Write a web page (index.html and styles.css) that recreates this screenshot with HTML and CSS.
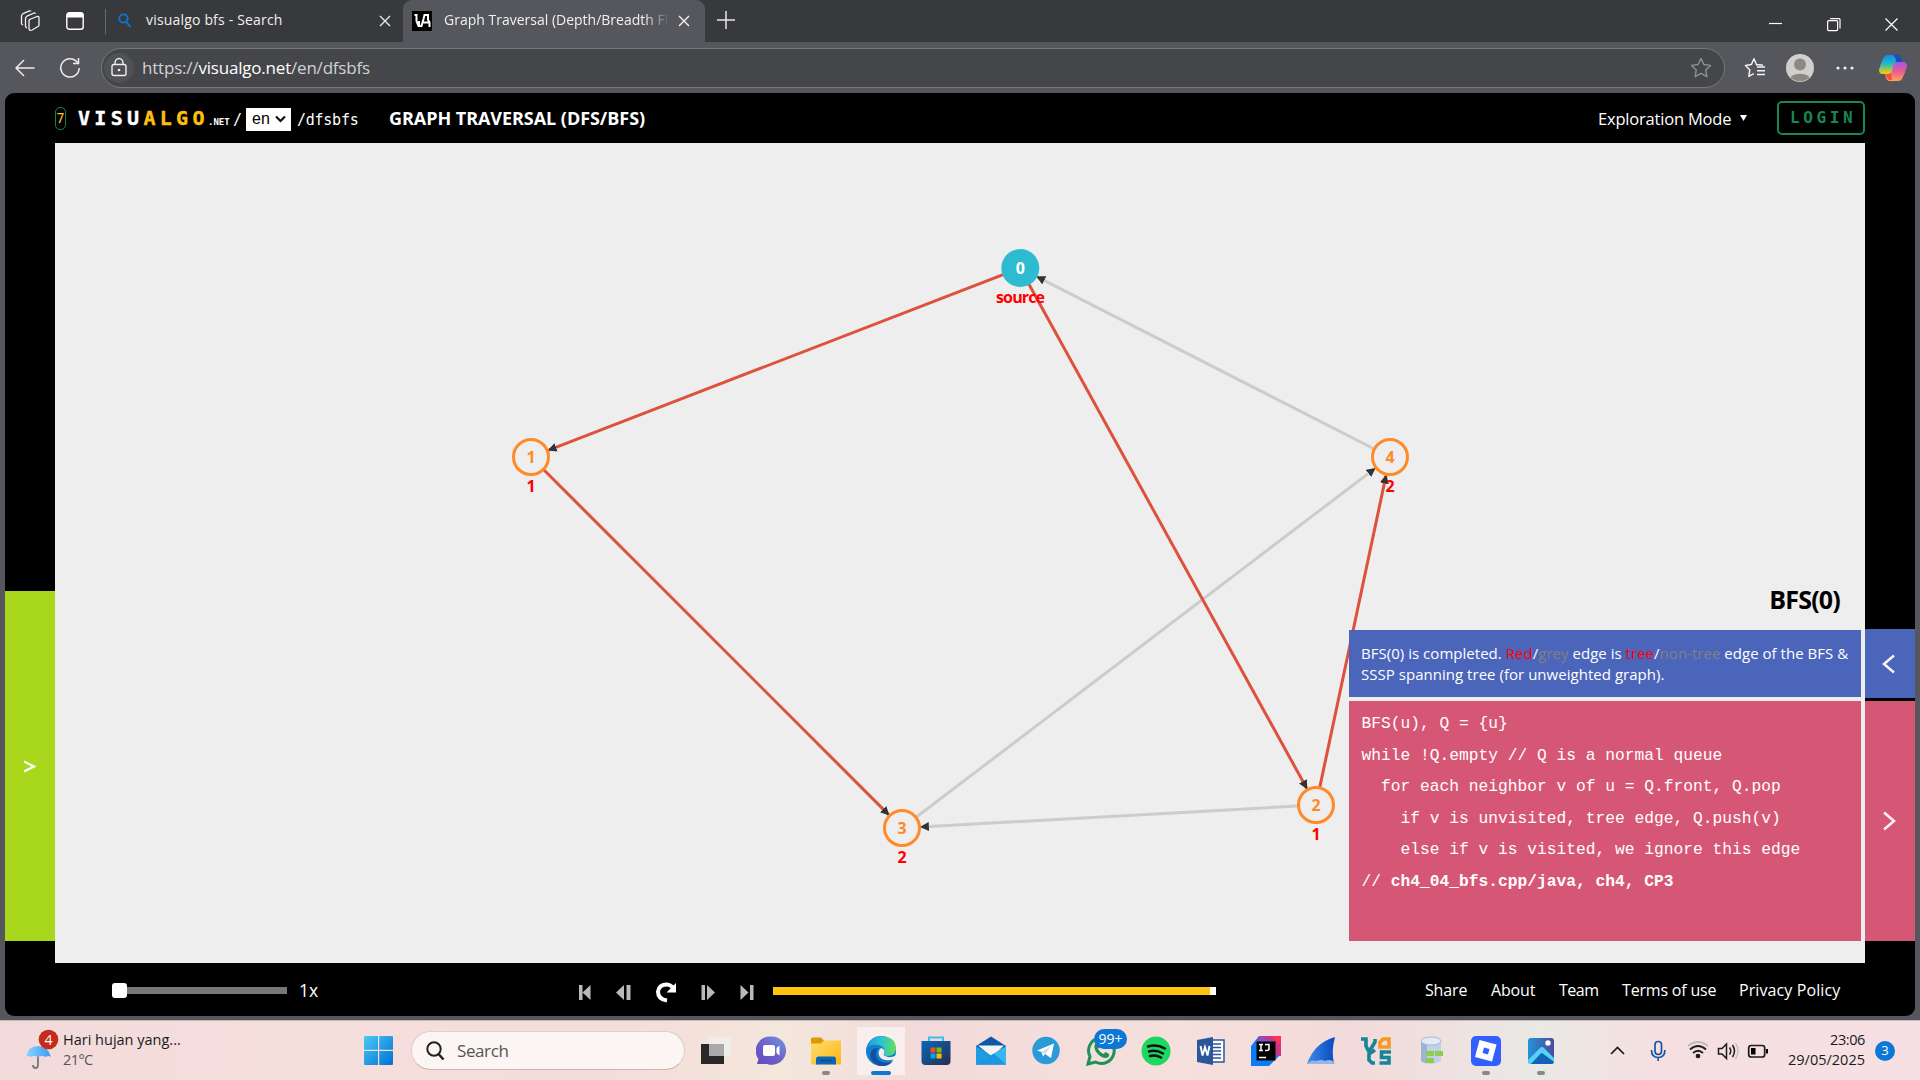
FILE: index.html
```html
<!DOCTYPE html>
<html lang="en">
<head>
<meta charset="utf-8">
<title>Graph Traversal (Depth/Breadth First Search) - VisuAlgo</title>
<link rel="stylesheet" href="styles.css">
</head>
<body>
<div class="screen">
  <div class="tabbar">
    <svg class="ic-spaces" width="22" height="22" viewBox="0 0 22 22"><g fill="none" stroke="#f2f2f2" stroke-width="1.3" stroke-linejoin="round"><path d="M10.500 9.500 18 6.500q2-.5 2 1.500v7q0 1-1 1.500l-6 3.500q-3 1-3-1.500v-7q0-1.300.5-2zM6.500 17V8.500q0-1.500 1.500-2.300l7-3.200q1-.4 1.500.6M2.500 14V6q0-1.500 1.500-2.300L10.500.9q1-.3 1.500.5M6.500 17l1.500 1M2.500 14l1.500 1"/></g></svg>
    <svg class="ic-tabs" width="18" height="18" viewBox="0 0 18 18"><rect x=".8" y=".8" width="16.400" height="16.400" rx="2.500" fill="none" stroke="#fff" stroke-width="1.400"/><path d="M1 3q0-2 2-2h12q2 0 2 2v2.500H1z" fill="#fff"/></svg>
    <i class="vline"></i>
    <svg class="ic-find" width="14" height="16" viewBox="0 0 14 16"><circle cx="5.500" cy="5.500" r="4.200" fill="none" stroke="#0a78d4" stroke-width="1.800"/><path d="M8.500 9l4 5" stroke="#0a78d4" stroke-width="2"/></svg>
    <span class="tab1">visualgo bfs - Search</span>
    <svg class="x1" width="12" height="12" viewBox="0 0 12 12"><path d="M1 1l10 10M11 1L1 11" stroke="#e8e8e8" stroke-width="1.400"/></svg>
    <div class="tab">
      <svg width="20" height="20" viewBox="0 0 20 20"><path d="M0 0h20v20H0z"/><path d="M2.500 4h2v6l2 5h3l2-7 1-4h3.500v5l1.500 2v5M11.500 11.500h5M7 10v4" fill="none" stroke="#fff" stroke-width="2"/></svg>
      <span class="tab2">Graph Traversal (Depth/Breadth Fi</span>
      <svg width="12" height="12" viewBox="0 0 12 12"><path d="M1 1l10 10M11 1L1 11" stroke="#f2f2f2" stroke-width="1.400"/></svg>
    </div>
    <svg class="plus" width="18" height="18" viewBox="0 0 18 18"><path d="M9 0v18M0 9h18" stroke="#e8e8e8" stroke-width="1.500"/></svg>
    <svg class="win" width="130" height="16" viewBox="0 0 130 16"><g fill="none" stroke="#fff" stroke-width="1.200"><path d="M0 6.500h13"/><rect x="58.600" y="3.600" width="10" height="10" rx="1"/><path d="M61 1.600h9q1 0 1 1v9"/><path d="M116.500 1.500l12 12M128.500 1.500l-12 12"/></g></svg>
  </div>
  <div class="toolbar">
    <svg class="ic-back" width="20" height="18" viewBox="0 0 20 18"><path d="M9 1L1 9l8 8M1 9h18.500" fill="none" stroke="#eee" stroke-width="1.500"/></svg>
    <svg class="ic-reload" width="22" height="22" viewBox="0 0 22 22"><path d="M18.500 5.500A9.200 9.200 0 1 0 20.200 11M19.500 1v5.500H14" fill="none" stroke="#eee" stroke-width="1.500"/></svg>
    <div class="address">
      <svg width="32" height="32" viewBox="0 0 32 32"><circle cx="16" cy="16" r="15" fill="#505155"/><rect x="9" y="12.500" width="14" height="11" rx="2" fill="none" stroke="#eee" stroke-width="1.400"/><path d="M12 12.500V11a4 4.500 0 0 1 8 0v1.500" fill="none" stroke="#eee" stroke-width="1.400"/><circle cx="16" cy="18" r="1.300" fill="#eee"/></svg>
      <span class="url">https://<b>visualgo.net</b>/en/dfsbfs</span>
      <svg class="star" width="22" height="22" viewBox="0 0 22 22"><path d="M11 1.500l2.900 6 6.600.9-4.800 4.600 1.200 6.600L11 16.400l-5.900 3.200 1.200-6.600L1.500 8.400l6.600-.9z" fill="none" stroke="#8e8f92" stroke-width="1.400" stroke-linejoin="round"/></svg>
    </div>
    <svg class="fav" width="22" height="22" viewBox="0 0 22 22"><path d="M13 8h-.3L10 1.800 7.400 7.500l-5.900.9 4.300 4.500-1 6.500 5-2.700M13 10h8M13 13.700h8M13 17.400h8M12.600 7.500l6.400.8" fill="none" stroke="#f2f2f2" stroke-width="1.500" stroke-linejoin="round"/></svg>
    <svg class="avatar" width="28" height="28" viewBox="0 0 28 28"><circle cx="14" cy="14" r="14" fill="#d1cfcb"/><circle cx="14" cy="10.500" r="6" fill="#8c8884"/><path d="M4.500 23.500a10.500 6.500 0 0 1 19 0A14 14 0 0 1 4.500 23.500z" fill="#8c8884"/></svg>
    <svg class="dots" width="18" height="4" viewBox="0 0 18 4" fill="#eee"><circle cx="2" cy="2" r="1.600"/><circle cx="9" cy="2" r="1.600"/><circle cx="16" cy="2" r="1.600"/></svg>
    <svg class="copilot" width="28" height="28" viewBox="0 0 28 28"><defs><linearGradient id="ca" x1="0" y1="0" x2="0" y2="1"><stop offset="0" stop-color="#168af0"/><stop offset=".45" stop-color="#22b8c4"/><stop offset="1" stop-color="#ffd000"/></linearGradient><linearGradient id="cb" x1="0" y1="0" x2="0" y2="1"><stop offset="0" stop-color="#a355f0"/><stop offset=".5" stop-color="#ed5a8e"/><stop offset="1" stop-color="#ffa35a"/></linearGradient></defs><path d="M9 1h9q2 0 3 3l1 4h-4q-2 0-3 3l-2 7q-1 2-4 2H4q-4 0-4-4Q2 8 5 3q1-2 4-2z" fill="url(#ca)"/><path d="M14 1h5q2 0 3 3l1 4h-5q-2 0-1-3z" fill="#164cc4"/><path d="M19 27h-9q-2 0-3-3l-1-4h4q2 0 3-3l2-7q1-2 4-2h5q4 0 4 4-2 8-5 13-1 2-4 2z" fill="url(#cb)"/><path d="M7 20h5l1 6h-2q-2 0-3-2z" fill="#f4512d"/></svg>
  </div>
  <div class="page">
    <header class="head">
      <span class="seven">7</span>
      <span class="logo">VISU<em>ALGO</em></span><span class="net">.NET</span><span class="slash">/</span>
      <span class="sel">en<svg width="11" height="8" viewBox="0 0 11 8"><path d="M1 1.500L5.500 6 10 1.500" fill="none" stroke="#111" stroke-width="2.200"/></svg></span>
      <span class="path">/dfsbfs</span>
      <span class="title">GRAPH TRAVERSAL (DFS/BFS)</span>
      <span class="mode">Exploration Mode</span>
      <svg class="tri" width="7" height="6" viewBox="0 0 7 6"><path d="M0 0h7L3.500 6z" fill="#fff"/></svg>
      <span class="login">LOGIN</span>
    </header>
    <main class="middle">
      <div class="lrail"><div class="green"><svg width="13" height="13" viewBox="0 0 13 13"><path d="M1 1.500l10 5-10 5" fill="none" stroke="#fff" stroke-width="2.200"/></svg></div></div>
      <div class="canvas">
        <svg class="graph" width="1810" height="820" viewBox="55 143 1810 820">
          <defs><marker id="ar" viewBox="0 0 8 8" refX="7" refY="4" markerWidth="9" markerHeight="9" markerUnits="userSpaceOnUse" orient="auto"><path d="M0 0l8 4-8 4z" fill="#333"/></marker></defs>
          <g class="edge grey"><path d="M1390 457L1037.200 276.800"/><path d="M902 828L1374.700 468.600"/><path d="M1316 805L921 827"/></g>
          <g class="edge red"><path d="M1020 268L548.700 450.200"/><path d="M1020 268L1306.700 788.300"/><path d="M531 457L888.600 814.600"/><path d="M1316 805L1386 475.600"/></g>
          <g class="lab"><text x="1020.500" y="302.500" textLength="49">source</text><text x="531" y="491.500">1</text><text x="1390" y="491.500">2</text><text x="1316" y="839.500">1</text><text x="902" y="862.500">2</text></g>
          <circle cx="1020.300" cy="268" r="19" fill="#2ebbd1"/>
          <g class="node"><circle cx="531" cy="457" r="17.500"/><circle cx="1390" cy="457" r="17.500"/><circle cx="1316" cy="805" r="17.500"/><circle cx="902" cy="828" r="17.500"/></g>
          <g class="num"><text x="1020.300" y="274" class="w">0</text><text x="531" y="463">1</text><text x="1390" y="463">4</text><text x="1316" y="811">2</text><text x="902" y="834">3</text></g>
        </svg>
        <div class="info">
          <h2>BFS(0)</h2>
          <div class="status">BFS(0) is completed. <i class="r">Red</i>/<i class="g">grey</i> edge is <i class="r">tree</i>/<i class="g">non-tree</i> edge of the BFS &amp;<br>SSSP spanning tree (for unweighted graph).</div>
          <div class="code">
            <div>BFS(u), Q = {u}</div>
            <div>while !Q.empty // Q is a normal queue</div>
            <div class="in1">for each neighbor v of u = Q.front, Q.pop</div>
            <div class="in2">if v is unvisited, tree edge, Q.push(v)</div>
            <div class="in2">else if v is visited, we ignore this edge</div>
            <div>// <b>ch4_04_bfs.cpp/java, ch4, CP3</b></div>
          </div>
        </div>
      </div>
      <div class="rrail"><div class="blue"><svg width="14" height="20" viewBox="0 0 14 20"><path d="M12 1.500L2 10l10 8.500" fill="none" stroke="#f4f4f8" stroke-width="2.600"/></svg></div><div class="pink"><svg width="14" height="20" viewBox="0 0 14 20"><path d="M2 1.500l10 8.500-10 8.500" fill="none" stroke="#f9f1f3" stroke-width="2.600"/></svg></div></div>
    </main>
    <footer class="foot">
      <span class="slider"><i></i></span><span class="speed">1x</span>
      <svg class="play" width="178" height="22" viewBox="576 981 178 22"><g fill="#b9b9b9"><path d="M579 985h3.500v15H579zM590.500 985v15l-8-7.500zM624 985v15l-8-7.500zM626.500 985h4v15h-4zM701.500 985h3.500v15h-3.500zM707 985l8 7.500-8 7.500zM740.500 985l8 7.500-8 7.500zM750 985h3.500v15H750z"/></g><path d="M667 1000.500q-9-1-9-9 1-7 9-7 3 0 6 3" fill="none" stroke="#fff" stroke-width="4"/><path d="M676 983v9.500h-9.500z" fill="#fff"/></svg>
      <span class="progress"></span>
      <nav><a class="n1">Share</a><a class="n2">About</a><a class="n3">Team</a><a class="n4">Terms of use</a><a class="n5">Privacy Policy</a></nav>
    </footer>
  </div>
  <div class="taskbar">
    <svg class="weather" width="34" height="44" viewBox="0 0 34 44"><defs><linearGradient id="um"><stop offset="0" stop-color="#8fd2ff"/><stop offset="1" stop-color="#3a9cf2"/></linearGradient></defs><path d="M12 21v15q0 3-2.500 3T7 36" fill="none" stroke="#777" stroke-width="1.800"/><path d="M0 28Q2 17 12 17T25 28q-3-2-5 0-4-2-8 0-4-2-7 0-3-2-5 0z" fill="url(#um)"/><circle cx="22.500" cy="10.500" r="9.800" fill="#c42b1c"/><text x="22.500" y="15.500" class="b4">4</text></svg>
    <div class="wtext"><span>Hari hujan yang...</span><span class="deg">21°C</span></div>
    <svg class="start" width="29" height="29" viewBox="0 0 29 29"><defs><linearGradient id="wn" x1="0" y1="0" x2="1" y2="1"><stop offset="0" stop-color="#4cc9fa"/><stop offset="1" stop-color="#0070d2"/></linearGradient></defs><path d="M1 0h13v13.800H0V1q0-1 1-1zM15.200 0H28q1 0 1 1v12.800H15.200zM0 15h14v14H1q-1 0-1-1zM15.200 15H29v13q0 1-1 1H15.200z" fill="url(#wn)"/></svg>
    <div class="search"><svg width="19" height="20" viewBox="0 0 19 20"><circle cx="8" cy="8" r="6.700" fill="none" stroke="#222" stroke-width="2"/><path d="M12.500 13l5 5.500" stroke="#222" stroke-width="2.500"/></svg><span>Search</span></div>
    <div class="apps">
      <span><svg viewBox="0 0 30 30"><path d="M0 8h23v20H0z" fill="#282828"/><path d="M8 1h22v19H8z" fill="#eee" opacity=".9"/><path d="M8 8h15v12H8z" fill="#aaa"/></svg></span>
      <span><svg viewBox="0 0 30 30"><defs><linearGradient id="ch" x1="1" y1="0" x2="0" y2="1"><stop offset="0" stop-color="#6a9bea"/><stop offset=".5" stop-color="#7360c6"/><stop offset="1" stop-color="#5a4bc4"/></linearGradient></defs><path d="M15 .5a14.200 14.200 0 1 1-4 27.500H1l1.500-5A14.200 14.200 0 0 1 15 .5z" fill="url(#ch)"/><rect x="7" y="9" width="12" height="11" rx="2" fill="#fff"/><path d="M20.500 12l3-2.500v10l-3-2.500z" fill="#fff"/></svg></span>
      <span class="run"><svg viewBox="0 0 30 30"><defs><linearGradient id="fo" x1="0" y1="0" x2="1" y2="1"><stop offset="0" stop-color="#ffdb70"/><stop offset="1" stop-color="#fdb813"/></linearGradient></defs><path d="M0 3q0-1.500 1.500-1.500H10l3 3V9H0z" fill="#dd9a06"/><path d="M0 7.500h10l3-3h17v24H0z" fill="url(#fo)"/><path d="M5 28.500V23q0-2.500 2.500-2.500h15q2.500 0 2.500 2.500v5.500z" fill="#0c66b8"/><path d="M9 24.500h12" stroke="#084a8c" stroke-width="1.500"/></svg></span>
      <span class="on"><svg viewBox="0 0 30 30"><defs><linearGradient id="e1"><stop offset="0" stop-color="#1f9be0"/><stop offset=".5" stop-color="#2dc3d2"/><stop offset="1" stop-color="#67df55"/></linearGradient></defs><circle cx="15" cy="15" r="15" fill="#0f7fd2"/><path d="M1 11Q5 0 16 0q14 1 14 13-1 7-8 7-5 0-4-3 2-7-6-8-6-1-11 2z" fill="url(#e1)"/><path d="M12 12q-5 8 2 13 6 4 13 0-6 7-15 4.500Q2 24 5 16q2-4 7-4z" fill="#11519b"/><path d="M30 19.500q-6 3-11 .5-2-1-.8-3.500Q19 13 15 12q-4 3-1.500 8.500Q17 26 28 23.500z" fill="#f8ecec"/></svg></span>
      <span><svg viewBox="0 0 30 30"><defs><linearGradient id="st" x1="0" y1="0" x2="1" y2="1"><stop offset="0" stop-color="#0869bd"/><stop offset="1" stop-color="#272c50"/></linearGradient></defs><path d="M8 6V1.500h14V6" fill="none" stroke="#3ac0ef" stroke-width="2"/><path d="M.5 5h29v20q0 4-4 4h-21q-4 0-4-4z" fill="url(#st)"/><path d="M9.500 11.500h5v5h-5z" fill="#f25022"/><path d="M15.500 11.500h5v5h-5z" fill="#7fba00"/><path d="M9.500 17.500h5v5h-5z" fill="#00a4ef"/><path d="M15.500 17.500h5v5h-5z" fill="#ffb900"/></svg></span>
      <span><svg viewBox="0 0 30 30"><path d="M0 10L15 .5 30 10v18.500H0z" fill="#0b58a8"/><path d="M2 9.500h26L16 21z" fill="#f4f4f4"/><path d="M0 10l16 10-14 8.500H0z" fill="#1e9be2"/><path d="M30 10v18.500H0z" fill="#35b7ef"/><path d="M0 28.500L18 17.500l12 11z" fill="#1d96e0"/></svg></span>
      <span><svg viewBox="0 0 30 30"><circle cx="15" cy="14.500" r="13.700" fill="#2a9bd6"/><path d="M6 14.500L23 7.500 20 22l-6-4-2 2.500-1.500-4.500z" fill="#fff"/><path d="M10.500 16L20 10l-6 8z" fill="#c7dfed"/></svg></span>
      <span><svg viewBox="0 0 30 30"><path d="M2 28l2-7.500A12.800 12.800 0 1 1 9.500 26z" fill="none" stroke="#1e9155" stroke-width="3"/><path d="M9 8q2-2 3 0l1.500 3-1.500 2q2 3.500 5.500 5l2-2 3.500 2q1 3-3 4-5 0-9-5-4-5-2-9z" fill="#1e9155"/></svg><i class="badge">99+</i></span>
      <span><svg viewBox="0 0 30 30"><circle cx="15" cy="15" r="14.500" fill="#1ed760"/><path d="M7 10.500q9-2.500 17 2M8 15.500q7-2 14 2M9 20q6-1.500 11 1.500" fill="none" stroke="#111" stroke-width="2.500" stroke-linecap="round"/></svg></span>
      <span><svg viewBox="0 0 30 30"><path d="M14 4h14v22H14z" fill="#fff" stroke="#2b579a" stroke-width="1.500"/><path d="M17 8h8M17 11.500h8M17 15h8M17 18.500h8M17 22h8" stroke="#2b579a" stroke-width="1.500"/><path d="M1 4l16-3v28L1 26z" fill="#2b579a"/><path d="M4.500 10l2 9.500L9 11l2.500 8.500 2-9.500" fill="none" stroke="#fff" stroke-width="1.900"/></svg></span>
      <span><svg viewBox="0 0 30 30"><path d="M8 0h22v18L18 30H0V10z" fill="#087cfa"/><path d="M10 0h20v20l-6-1V6L5 5z" fill="#cf3384"/><path d="M20 0h10v10z" fill="#fe315d"/><path d="M0 12L12 0l8 6L6 8z" fill="#6b57ff" opacity=".6"/><path d="M5.500 5.500h19v19h-19z"/><path d="M8 8.500h4M10 8.500v6M8 14.500h4M14 8.500h4v4q0 2-2 2h-2M8 21.500h7" fill="none" stroke="#fff" stroke-width="1.500"/></svg></span>
      <span><svg viewBox="0 0 30 30"><defs><linearGradient id="ws"><stop offset="0" stop-color="#3f8de9"/><stop offset="1" stop-color="#0649c0"/></linearGradient></defs><path d="M1 28Q8 7 29 1q-4 14-1 27z" fill="url(#ws)"/><path d="M1 28q4-5 9-3 5-2 9 0 4-2 8 0l2 3z" fill="#94b7e5"/></svg></span>
      <span><svg viewBox="0 0 30 30"><g fill="none" stroke="#168596" stroke-width="3.600"><path d="M0 3h5v7l3 6M14 3v3l-6 10"/><path d="M14 14l-6 4v6l3 3h3"/><path d="M30 16h-9.500v5.500H28V27h-9.500"/></g><path d="M19 11V6l3-3h6v8z" fill="none" stroke="#f59a23" stroke-width="3.600"/></svg></span>
      <span><svg viewBox="0 0 30 30"><path d="M5 5v20q10 6 20 0V5z" fill="#c1d0e6"/><path d="M5 5v20q3 2 6 2.500V7z" fill="#9db3d4"/><ellipse cx="15" cy="5" rx="10" ry="4" fill="#e3ebf5" stroke="#a9bcd7"/><path d="M10 15h8v5h-8zM19 15h8v5h-8zM10 22h8v5h-8z" fill="#8dcf4d"/></svg></span>
      <span class="run"><svg viewBox="0 0 30 30"><rect width="30" height="30" rx="5" fill="#335fff"/><path d="M8.500 4l17 4.500-4.500 17-17-4.500zM13 11.500l-1.500 5.500 5.500 1.500 1.500-5.500z" fill="#fff" fill-rule="evenodd"/></svg></span>
      <span class="run"><svg viewBox="0 0 30 30"><defs><linearGradient id="ph"><stop offset="0" stop-color="#2493d8"/><stop offset="1" stop-color="#4b4b9e"/></linearGradient></defs><rect x="2" y="2" width="26" height="26" rx="3" fill="url(#ph)"/><path d="M2 24l12-12q2-2 4 0l10 10v4L15 17 5 28q-3 0-3-3z" fill="#54d3f5"/><path d="M16 17l12 9q-1 2-3 2H5z" fill="#1263b7"/><circle cx="22" cy="7" r="2.700" fill="#fff"/></svg></span>
    </div>
    <svg class="tray" width="164" height="30" viewBox="1608 1035 164 30"><g fill="none" stroke="#1c1c1c" stroke-width="1.700"><path d="M1611 1053l6.500-6.500 6.500 6.500"/><g stroke="#1855a5"><rect x="1655" y="1040.500" width="6.500" height="13" rx="3.200"/><path d="M1651.500 1049q0 7.500 6.700 7.500t6.700-7.500M1658.200 1056.500v3.500"/></g><path d="M1690 1048.500q8-7 16 0M1693 1052q5-4.500 10 0" /><path d="M1688 1045q10-8 20 0" stroke="#bbb"/><circle cx="1698" cy="1055" r="1.500" fill="#1c1c1c"/><path d="M1718.500 1047.500h3.500l4.500-4.500v14.500l-4.500-4.500h-3.500zM1729.500 1046.500q2.500 3.500 0 7M1732.500 1044q4 6 0 12" stroke-width="1.500"/><path d="M1735.500 1042q5 8 0 16" stroke="#bbb" stroke-width="1.300"/><rect x="1748.700" y="1044.500" width="16" height="11.500" rx="2.500"/></g><path d="M1751 1047h4.500v6.500h-4.500zM1766 1048h2v4.500h-2z"/></svg>
    <div class="clock"><span class="time">23:06</span><span>29/05/2025</span></div>
    <span class="note">3</span>
  </div>
</div>
</body>
</html>
```
FILE: styles.css
```css
* { box-sizing: border-box; }
body { margin: 0; background: #56575c; font-family: "Open Sans", sans-serif; }
svg { display: block; flex: none; }
.screen { width: 1920px; height: 1080px; display: flex; flex-direction: column; overflow: hidden; }
span, a { white-space: nowrap; }

.tabbar { height: 42px; background: #38393c; display: flex; align-items: center; color: #f0f0f0; font-size: 14px; flex: none; }
.ic-spaces { margin-left: 19px; }
.ic-tabs { margin-left: 25px; }
.vline { width: 1px; height: 25px; background: #68696c; margin: 0 12px 0 21px; }
.tab1 { margin-left: 14px; width: 233px; margin-top: -3px; letter-spacing: 0.18px; }
.tab { margin-left: 12px; width: 302px; height: 42px; background: #56575c; border-radius: 9px 9px 0 0; display: flex; align-items: center; padding-left: 9px; }
.tab2 { margin-left: 12px; width: 229px; overflow: hidden; margin-top: -3px; -webkit-mask-image: linear-gradient(90deg, #000 200px, transparent 226px); mask-image: linear-gradient(90deg, #000 200px, transparent 226px); }
.tab .tab2 + svg { margin-left: 5px; }
.plus { margin-left: 12px; margin-top: -2px; }
.win { margin-left: auto; margin-right: 21px; margin-top: 8px; }

.toolbar { height: 51px; display: flex; align-items: center; flex: none; }
.ic-back { margin-left: 15px; }
.ic-reload { margin-left: 24px; }
.address { margin-left: 20px; width: 1624px; height: 40px; border: 1px solid #77787b; border-radius: 20px; background: #454649; display: flex; align-items: center; padding-left: 1px; }
.url { margin-left: 7px; font-size: 17px; letter-spacing: -0.2px; color: #d2d2d2; margin-top: -1px; }
.url b { font-weight: 400; color: #fff; }
.star { margin-left: auto; margin-right: 12px; }
.fav { margin-left: 19px; }
.avatar { margin-left: 20px; }
.dots { margin-left: 22px; }
.copilot { margin-left: 25px; }

.page { margin: 0 5px; height: 923px; background: #000; border-radius: 9px; display: flex; flex-direction: column; flex: none; overflow: hidden; }
.head { height: 50px; display: flex; align-items: center; padding-left: 50px; color: #fff; flex: none; }
.seven { width: 11px; height: 23px; border: 1px solid #17814f; border-radius: 5px; color: #fcc419; font: 14px/21px "DejaVu Sans Mono", monospace; display: flex; justify-content: center; }
.logo { margin-left: 12px; width: 130px; font: bold 20px/24px "DejaVu Sans Mono", monospace; letter-spacing: 4.3px; -webkit-text-stroke: 0.4px currentColor; }
.logo em { font-style: normal; color: #fdc010; }
.net { font: bold 9px/12px "DejaVu Sans Mono", monospace; width: 25px; margin-top: 8px; }
.slash { font: 15px/20px "DejaVu Sans Mono", monospace; width: 13px; }
.slash, .path { margin-top: 3px; }
.sel { width: 45px; height: 23px; background: #fff; color: #000; display: flex; align-items: center; gap: 5px; padding-left: 6px; font: 16px/22px "Liberation Sans", sans-serif; margin-top: 2px; }
.path { margin-left: 6px; font: 15px/20px "DejaVu Sans Mono", monospace; letter-spacing: -0.25px; width: 61px; }
.title { margin-left: 31px; font-weight: 700; font-size: 18px; letter-spacing: -0.05px; width: 260px; }
.mode { margin-left: 949px; width: 133px; font-size: 16.500px; letter-spacing: -0.2px; }
.tri { margin-left: 9px; }
.login { margin-left: 30px; width: 88px; height: 34px; border: 2px solid #198754; border-radius: 5px; color: #198754; font: bold 16px/30px "DejaVu Sans Mono", monospace; letter-spacing: 3.600px; padding-left: 11px; }

.middle { height: 820px; display: flex; flex: none; }
.lrail, .rrail { width: 50px; }
.lrail { padding-top: 448px; }
.green { height: 350px; background: #a9d71c; display: flex; align-items: center; justify-content: center; padding-right: 1px; }
.canvas { width: 1810px; background: #eee; display: grid; }
.canvas > * { grid-area: 1 / 1; }
.edge path { stroke-width: 3; marker-end: url(#ar); }
.grey { stroke: #ccc; }
.red { stroke: #dc523c; }
.node { fill: #eee; stroke: #ff8a27; stroke-width: 3; }
.num text, .lab text { text-anchor: middle; font-weight: 700; font-size: 16px; }
.num { fill: #ff8a27; }
.num .w { fill: #fff; }
.lab { fill: #f00; }
.info { width: 512px; margin: 434px 4px 0 auto; position: relative; }
.info h2 { margin: 0; height: 53px; padding-right: 21px; text-align: right; font-size: 25px; line-height: 45px; letter-spacing: -0.8px; }
.status { height: 67px; background: #4b65ba; color: #fff; font-size: 15px; letter-spacing: 0.03px; line-height: 21px; padding: 13px 0 0 12px; white-space: nowrap; }
.status i { font-style: normal; }
.r { color: #f00; }
.g { color: #808080; }
.code { margin: 4px 0 0; height: 240px; background: #d65775; color: #fff; font: 16.250px/31.500px "Liberation Mono", monospace; padding: 7px 0 0 12.500px; white-space: nowrap; }
.in1 { padding-left: 2ch; }
.in2 { padding-left: 4ch; }
.rrail { padding-top: 486px; }
.blue, .pink { display: flex; align-items: center; justify-content: center; padding-right: 2px; }
.blue { height: 69px; background: #4b65ba; margin-bottom: 3px; }
.pink { height: 240px; background: #d65775; }

.foot { height: 53px; display: flex; align-items: center; color: #fff; font-size: 16px; flex: none; }
.slider { margin-left: 107px; margin-top: 1px; width: 175px; height: 7px; background: #777; display: flex; align-items: center; }
.slider i { width: 15px; height: 15px; background: #fff; border-radius: 3px; }
.speed { margin-left: 12px; width: 20px; font-size: 17.500px; }
.play { margin-left: 257px; margin-top: 4px; }
.progress { margin-left: 19px; width: 443px; height: 8px; background: #fdc30f; border-right: 6px solid #fff; margin-top: 3px; }
nav { margin-left: 209px; display: flex; }
.n1 { width: 66px; letter-spacing: -0.15px; }
.n2 { width: 68px; letter-spacing: -0.15px; }
.n3 { width: 63px; letter-spacing: -0.5px; }
.n4 { width: 117px; letter-spacing: -0.18px; }
.n5 { letter-spacing: 0.1px; }

.taskbar { height: 60px; margin-top: 4px; display: flex; align-items: center; background: linear-gradient(90deg, #f3dada 0, #f5dfdd 300px, #f4dcda 600px, #f4e7dc 780px, #f3dada 920px, #f5e0dd 1180px, #f3dada 1350px, #eae9e5 1540px, #f6dfe0 1660px, #f6e0e4 1920px); border-top: 1px solid #c9b7b8; flex: none; color: #1b1b1b; font-size: 14.500px; }
.weather { margin-left: 26px; }
.b4 { fill: #fff; font-size: 14px; text-anchor: middle; }
.wtext { margin-left: 3px; width: 301px; display: flex; flex-direction: column; line-height: 20px; margin-top: -2px; }
.deg { color: #555; letter-spacing: -0.6px; }
.search { margin-left: 18px; width: 274px; height: 39px; border-radius: 20px; background: #fbf5f4; border: 1px solid #e2cdcc; border-bottom-color: #c9b2b2; display: flex; align-items: center; padding-left: 14px; gap: 12px; font-size: 17px; letter-spacing: -0.4px; color: #555; }
.apps { display: flex; margin-left: 3px; }
.apps > span { width: 55px; height: 48px; display: flex; align-items: center; justify-content: center; position: relative; }
.apps svg { width: 30px; height: 30px; }
.on { background: linear-gradient(#f9eeee, #f9eeee) center / 48px 48px no-repeat; }
.run::after, .on::after { content: ""; position: absolute; bottom: 0; width: 8px; height: 4px; border-radius: 2px; background: #888; }
.on::after { width: 20px; background: #0a78d4; }
.badge { position: absolute; left: 21px; top: 2px; width: 33px; height: 20px; border-radius: 10px; background: #0a78d4; color: #fff; font: 14px/19px "Open Sans", sans-serif; text-align: center; }
.tray { margin-left: 40px; }
.clock { width: 93px; display: flex; flex-direction: column; align-items: flex-end; line-height: 20px; margin-top: -2px; }
.time { letter-spacing: -0.4px; }
.note { margin-left: 10px; width: 20px; height: 20px; border-radius: 50%; background: #0a78d4; color: #fff; font-size: 13px; line-height: 19px; text-align: center; }
```
